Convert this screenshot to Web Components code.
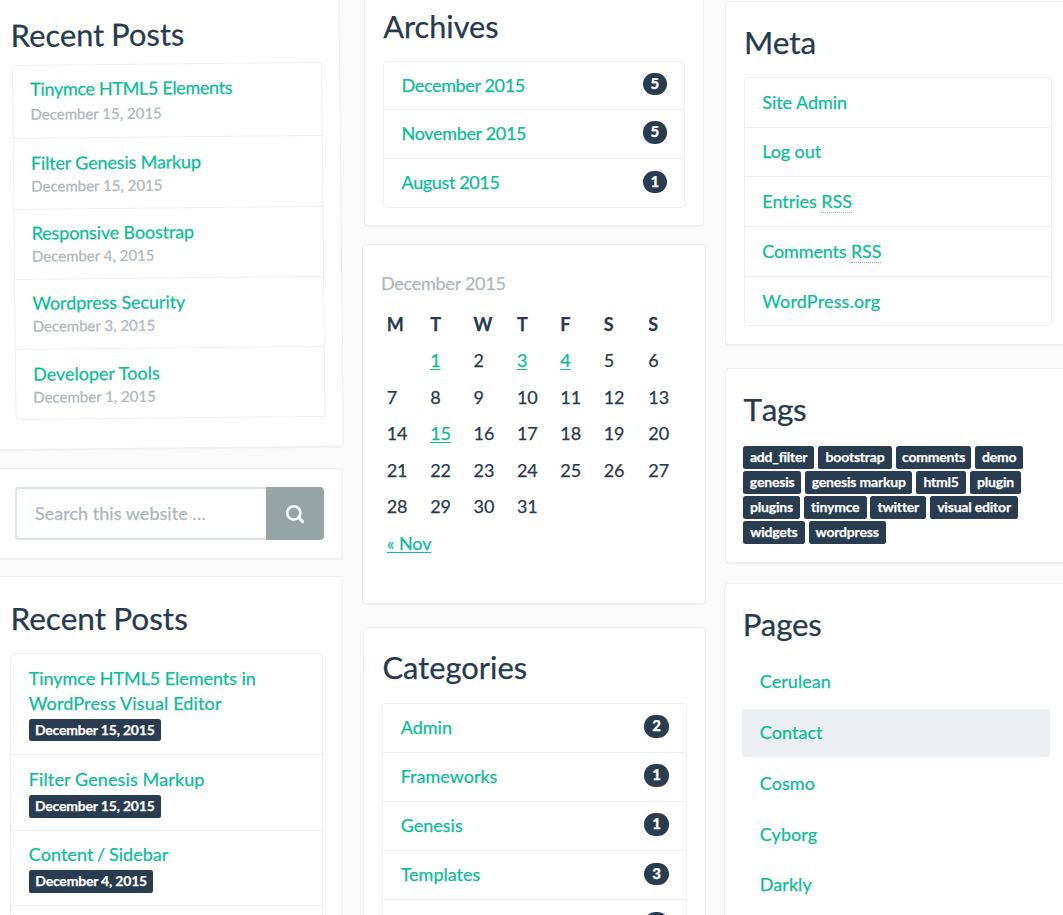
<!DOCTYPE html>
<html lang="en">
<head>
<meta charset="utf-8">
<title>Widgets</title>
<style>
  html, body { margin: 0; height: 100%; }
  body { font-family: Lato, "Liberation Sans", sans-serif; background: #fbfbfb; overflow: hidden; -webkit-text-stroke: .25px; }
</style>
</head>
<body>
<widget-board></widget-board>
<script>
const define = (name, css, html, setup) => {
  const tpl = document.createElement('template');
  tpl.innerHTML = `<style>*{box-sizing:border-box}${css}</style>${html}`;
  customElements.define(name, class extends HTMLElement {
    constructor() {
      super();
      this.attachShadow({ mode: 'open' }).append(tpl.content.cloneNode(true));
    }
    connectedCallback() { if (setup) setup(this, this.shadowRoot); }
  });
};

define('widget-card', `
  :host { display: block; box-sizing: border-box; flex: none; background: #fff; border: 1px solid #ecf0f1;
    border-radius: 4px; box-shadow: 0 1px 1px rgba(0,0,0,.04); }
  h3 { margin: 0; font-weight: 400; font-size: var(--hs, 31.5px); line-height: 34px; color: #263a50;
    letter-spacing: var(--hl, 0); word-spacing: -1px; font-kerning: var(--hk, auto); white-space: nowrap; }
  h3:empty { display: none; }
`, `<h3></h3><slot></slot>`, (host, root) => {
  root.querySelector('h3').textContent = host.getAttribute('heading') || '';
});

define('list-box', `
  :host { display: flex; flex-direction: column; box-sizing: border-box; border: 1px solid #ecf0f1; border-radius: 4px; }
`, `<slot></slot>`);

define('list-row', `
  :host { display: flex; align-items: center; justify-content: space-between; flex: none; box-sizing: border-box;
    height: var(--row); padding: 0 17px 1.6px 17.3px; border-bottom: 1px solid #ecf0f1;
    font-size: 18px; line-height: 24px; color: #0dbc98; white-space: nowrap; }
  :host(:last-child) { border-bottom: 0; }
`, `<slot></slot><slot name="end"></slot>`);

define('count-badge', `
  :host { display: block; width: 24.5px; height: 22.5px; border-radius: 11.3px; background: #293c50; color: #fff;
    font-weight: 900; font-size: 15px; line-height: 21.5px; text-align: center; margin: -1px 0 0 auto; }
`, `<slot></slot>`);

define('text-label', `
  :host { display: block; width: var(--w); height: 22.7px; border-radius: 2.5px; background: #293c50; color: #fff;
    font-weight: 700; font-size: 14px; line-height: 22.6px; letter-spacing: -.2px; text-align: center; white-space: nowrap; }
`, `<slot></slot>`);

define('post-row', `
  :host { display: block; flex: none; box-sizing: border-box; height: var(--row); padding: var(--pt, 12px) 17px 0 var(--pl, 17.3px);
    border-bottom: 1px solid #ecf0f1; font-size: 18px; line-height: var(--lh, 25px); color: #0dbc98; white-space: nowrap; }
  :host(:last-child) { border-bottom: 0; }
  slot[name=date] { display: block; margin-top: var(--gap, 0); }
`, `<slot></slot><slot name="date"></slot>`);

define('post-date', `
  :host { display: block; font-size: 15px; line-height: 22px; color: #b0b8be; }
`, `<slot></slot>`);

define('search-box', `
  :host { display: flex; height: 53px; }
  .field { flex: 1; border: 2px solid #dce4ec; border-right: 0; border-radius: 4px 0 0 4px; padding-left: 18px;
    font-size: 18px; line-height: 49px; color: #acb6c0; letter-spacing: .04px; }
  .go { width: 58px; background: #95a5a6; border-radius: 0 4px 4px 0; display: grid; place-items: center; }
  svg { display: block; }
`, `<div class="field"><slot></slot></div>
<div class="go"><svg width="20" height="20" viewBox="0 0 20 20" fill="none" stroke="#fff">
<circle cx="8.8" cy="8.9" r="6.6" stroke-width="2.6"/><path d="M13.6 13.7 17.5 17.6" stroke-width="3.2" stroke-linecap="round"/></svg></div>`);

define('month-calendar', `
  :host { display: block; font-size: 18px; color: #263a50; }
  .cap { line-height: 30px; color: #b0b8be; letter-spacing: -.25px; }
  .grid { display: grid; grid-template-columns: repeat(5, 43.4px) 44.6px auto; grid-auto-rows: 36.5px; line-height: 36.5px;
    padding-left: 5.8px; margin-top: 7.3px; letter-spacing: -.1px; }
  .h { font-weight: 700; }
  a { color: #0dbc98; text-decoration: underline; text-underline-offset: 2px; text-decoration-thickness: 1.3px; }
  .prev { grid-column: span 7; }
`, `<div class="cap"></div><div class="grid"></div>`, (host, root) => {
  root.querySelector('.cap').textContent = 'December 2015';
  const posts = [1, 3, 4, 15];
  const cells = [...'MTWTFSS'].map(d => `<div class="h">${d}</div>`);
  cells.push('<div></div>');
  for (let d = 1; d <= 31; d++) cells.push(`<div>${posts.includes(d) ? `<a>${d}</a>` : d}</div>`);
  cells.push('<div></div><div></div><div></div>');
  cells.push('<div class="prev"><a>« Nov</a></div>');
  root.querySelector('.grid').innerHTML = cells.join('');
});

define('nav-pill', `
  :host { display: block; height: 48px; margin-bottom: 2.75px; padding-left: 18px; border-radius: 4px;
    font-size: 18px; line-height: 47.5px; color: #0dbc98; letter-spacing: .05px; }
  :host([active]) { background: #ebeff1; }
`, `<slot></slot>`);

define('widget-board', `
  :host { display: grid; grid-template-columns: 353px 343.5px 360px; column-gap: 19px; margin-left: -10px;
    width: 1100px; height: 915px; overflow: hidden; }
  .col { display: flex; flex-direction: column; height: 915px; }
  .mid { margin-left: .4px; margin-right: -.4px; }
  .tags { display: flex; flex-wrap: wrap; gap: 2.4px 3.9px; margin: 20.4px 0 0 -.5px; width: 290px; }
  abbr { border-bottom: 1px dotted #9fabb2; text-decoration: none; }
  span { display: block; }
`, `
<div class="col">
  <widget-card heading="Recent Posts" style="--hs:30.9px;width:350px;height:470.3px;margin-top:-20px;padding:37.5px 17.5px 0 20px;transform:rotate(-.57deg);transform-origin:22px 85px">
    <list-box style="--lh:24px;--pt:11.4px;--pl:17px;margin:12.5px 0 0 1px;width:309.5px;height:354.5px">
      <post-row style="--row:73px;--pt:10.7px;--gap:2.6px"><span style="letter-spacing:-.33px">Tinymce HTML5 Elements</span><post-date slot="date">December 15, 2015</post-date></post-row>
      <post-row style="--row:71px;--pt:12px"><span style="letter-spacing:-.16px">Filter Genesis Markup</span><post-date slot="date">December 15, 2015</post-date></post-row>
      <post-row style="--row:70px"><span style="letter-spacing:-.16px">Responsive Boostrap</span><post-date slot="date">December 4, 2015</post-date></post-row>
      <post-row style="--row:70.3px"><span style="letter-spacing:-.1px">Wordpress Security</span><post-date slot="date">December 3, 2015</post-date></post-row>
      <post-row style="--row:70px"><span>Developer Tools</span><post-date slot="date">December 1, 2015</post-date></post-row>
    </list-box>
  </widget-card>
  <widget-card style="width:352.5px;height:91px;margin-top:18px;padding:18px 17.6px 0 23.9px"><search-box>Search this website …</search-box></widget-card>
  <widget-card heading="Recent Posts" style="--hs:31.6px;width:352.5px;height:370px;margin-top:17px;padding:23.6px 18.2px 0 19.4px">
    <list-box style="--pl:18px;margin:18.4px 0 0 -.6px;height:330px">
      <post-row style="--row:101px;--gap:2.5px"><span style="letter-spacing:-.05px">Tinymce HTML5 Elements in</span><span style="letter-spacing:.14px">WordPress Visual Editor</span><text-label slot="date" style="--w:132px">December 15, 2015</text-label></post-row>
      <post-row style="--row:75.6px;--gap:2.7px"><span style="letter-spacing:.12px">Filter Genesis Markup</span><text-label slot="date" style="--w:132px">December 15, 2015</text-label></post-row>
      <post-row style="--row:75.6px;--pt:11.5px;--gap:2.8px"><span style="word-spacing:-1px;letter-spacing:.05px">Content / Sidebar</span><text-label slot="date" style="--w:124.7px">December 4, 2015</text-label></post-row>
      <post-row style="--row:75.6px"></post-row>
    </list-box>
  </widget-card>
</div>
<div class="col mid">
  <widget-card heading="Archives" style="--hs:30.7px;width:339.5px;height:240px;margin:-14px 0 0 2px;padding:22.5px 17.9px 0 17.9px">
    <list-box style="--row:48.7px;margin-top:17px;height:147px">
      <list-row><span style="letter-spacing:-.36px">December 2015</span><count-badge slot="end">5</count-badge></list-row>
      <list-row><span style="letter-spacing:-.33px">November 2015</span><count-badge slot="end">5</count-badge></list-row>
      <list-row><span style="letter-spacing:-.37px">August 2015</span><count-badge slot="end">1</count-badge></list-row>
    </list-box>
  </widget-card>
  <widget-card style="height:360.3px;margin-top:18.2px;padding:23.3px 17px 0 17.6px"><month-calendar></month-calendar></widget-card>
  <widget-card heading="Categories" style="--hs:30.9px;width:342.5px;height:320px;margin:22.7px 0 0 1px;padding:23.2px 18px 0">
    <list-box style="--row:49.1px;margin-top:17.4px;height:300px">
      <list-row>Admin<count-badge slot="end">2</count-badge></list-row>
      <list-row>Frameworks<count-badge slot="end">1</count-badge></list-row>
      <list-row>Genesis<count-badge slot="end">1</count-badge></list-row>
      <list-row>Templates<count-badge slot="end">3</count-badge></list-row>
      <list-row><count-badge slot="end"></count-badge></list-row>
    </list-box>
  </widget-card>
</div>
<div class="col" style="margin-left:-.5px">
  <widget-card heading="Meta" style="--hs:31.6px;--hl:-.1px;height:344px;margin:1px 0 0 1px;padding:23px 0 0 18px">
    <list-box style="--row:49.7px;margin-top:18px;width:308px;height:249px">
      <list-row><span style="letter-spacing:-.05px">Site Admin</span></list-row>
      <list-row><span style="letter-spacing:-.1px">Log out</span></list-row>
      <list-row><span style="letter-spacing:-.05px">Entries <abbr>RSS</abbr></span></list-row>
      <list-row><span style="letter-spacing:-.14px">Comments <abbr>RSS</abbr></span></list-row>
      <list-row><span style="letter-spacing:.15px">WordPress.org</span></list-row>
    </list-box>
  </widget-card>
  <widget-card heading="Tags" style="--hk:none;--hl:-.4px;height:194.5px;margin:23.3px 0 0 1px;padding:22.5px 0 0 17.5px">
    <div class="tags">
      <text-label style="--w:71.3px">add_filter</text-label><text-label style="--w:73.7px">bootstrap</text-label><text-label style="--w:75.7px">comments</text-label><text-label style="--w:47.7px">demo</text-label>
      <text-label style="--w:58.3px">genesis</text-label><text-label style="--w:107px">genesis markup</text-label><text-label style="--w:50px">html5</text-label><text-label style="--w:51px">plugin</text-label>
      <text-label style="--w:57px">plugins</text-label><text-label style="--w:62.7px">tinymce</text-label><text-label style="--w:55.7px">twitter</text-label><text-label style="--w:88px">visual editor</text-label>
      <text-label style="--w:61.7px">widgets</text-label><text-label style="--w:77px">wordpress</text-label>
    </div>
  </widget-card>
  <widget-card heading="Pages" style="--hs:31.2px;--hl:-.2px;height:350px;margin-top:20.5px;padding:22.3px 0 0 17.8px">
    <div style="margin:17.9px 0 0 -1px;width:308px">
      <nav-pill>Cerulean</nav-pill><nav-pill active>Contact</nav-pill><nav-pill>Cosmo</nav-pill><nav-pill>Cyborg</nav-pill><nav-pill>Darkly</nav-pill>
    </div>
  </widget-card>
</div>`);
</script>
</body>
</html>
